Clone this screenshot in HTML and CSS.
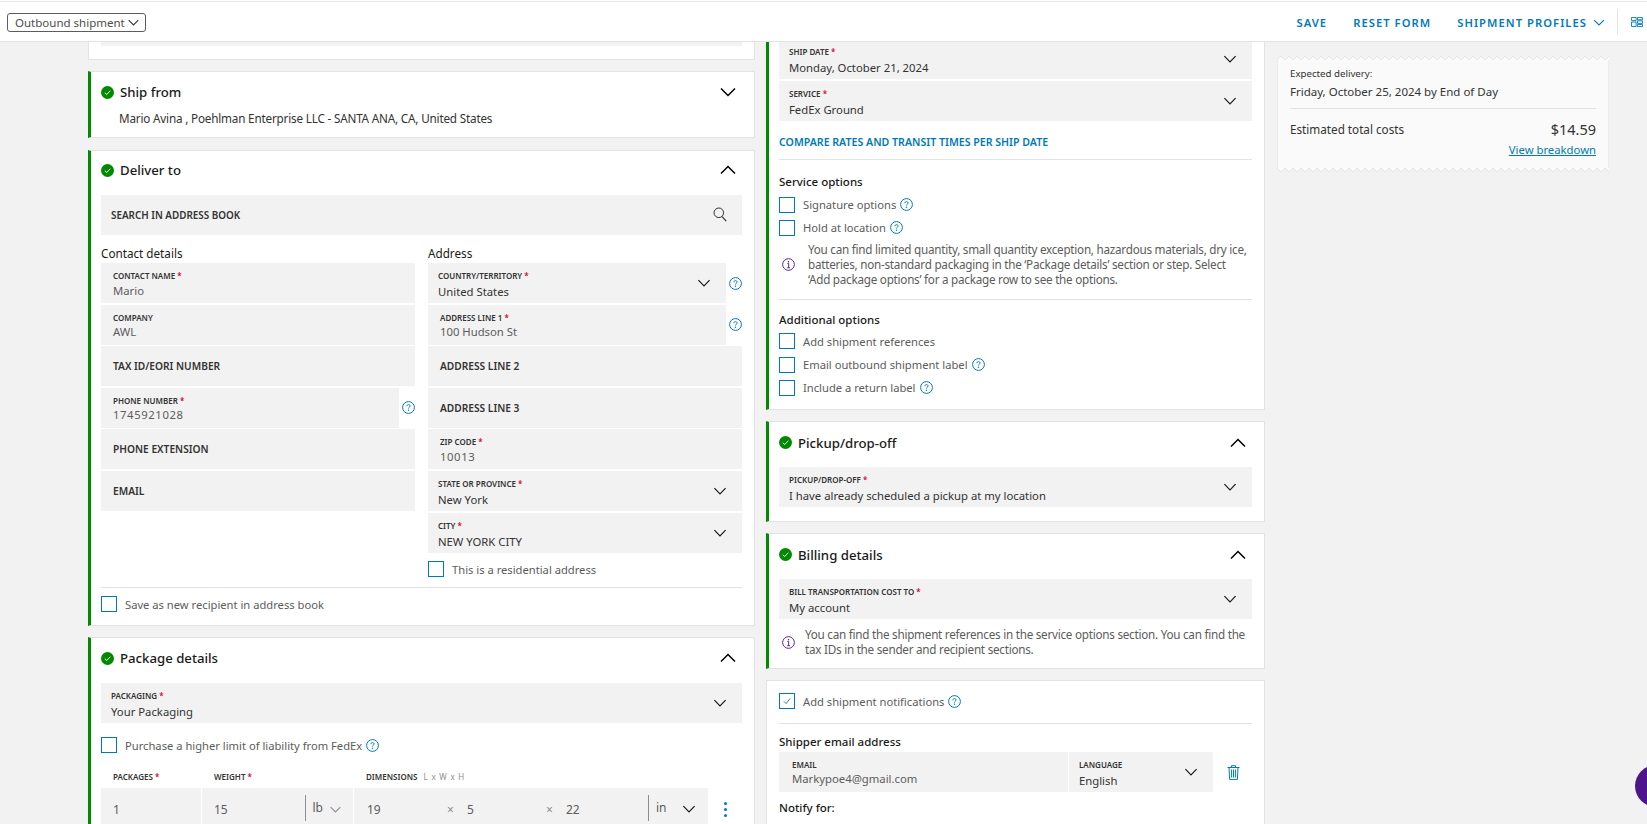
FILE: index.html
```html
<!DOCTYPE html>
<html lang="en">
<head>
<meta charset="utf-8">
<title>Outbound shipment</title>
<link rel="stylesheet" href="styles.css">
</head>
<body>
<svg class="sprite" aria-hidden="true">
  <symbol id="chev" viewBox="0 0 16 10"><path d="M1 1.5 8 8.5 15 1.5" fill="none" stroke="currentColor" stroke-width="1.5"/></symbol>
  <symbol id="chev-up" viewBox="0 0 16 10"><path d="M1 8.5 8 1.5 15 8.5" fill="none" stroke="currentColor" stroke-width="1.5"/></symbol>
  <symbol id="ok" viewBox="0 0 13 13"><circle cx="6.5" cy="6.5" r="6.5" fill="#008a00"/><path d="M3.8 6.7 5.7 8.5 9.3 4.7" fill="none" stroke="#fff" stroke-width="1"/></symbol>
  <symbol id="help" viewBox="0 0 13 13"><circle cx="6.5" cy="6.5" r="5.9" fill="none" stroke="#007ab7" stroke-width="1"/><path d="M4.9 5.2C4.9 4.2 5.6 3.6 6.5 3.6 7.4 3.6 8.1 4.2 8.1 5 8.1 6.1 6.5 6.2 6.5 7.5" fill="none" stroke="#007ab7" stroke-width="1"/><circle cx="6.5" cy="9.3" r=".7" fill="#007ab7"/></symbol>
  <symbol id="info" viewBox="0 0 14 14"><circle cx="7" cy="7" r="6.3" fill="none" stroke="#4d148c" stroke-width="1"/><circle cx="7" cy="4" r=".8" fill="#4d148c"/><path d="M5.8 6H7.2V10.5M5.6 10.5H8.6" fill="none" stroke="#4d148c" stroke-width="1"/></symbol>
  <symbol id="search" viewBox="0 0 14 15"><circle cx="5.8" cy="5.8" r="4.8" fill="none" stroke="#333" stroke-width="1"/><path d="M9.2 9.6 13.2 14.2" stroke="#333" stroke-width="1.2"/></symbol>
  <symbol id="trash" viewBox="0 0 13 15"><path d="M.5 2.5H12.5M4.5 2.5V.7H8.5V2.5M2 2.5 2.6 14.4H10.4L11 2.5M4.6 4.5V12.5M6.5 4.5V12.5M8.4 4.5V12.5" fill="none" stroke="#007ab7" stroke-width="1"/></symbol>
  <symbol id="layout" viewBox="0 0 13 11"><path d="M.5 .5H5.5V4H.5ZM.5 5.5H5.5V10.5H.5ZM7 .5H12.5V3H7ZM7 4.2H12.5V7H7ZM7 8.2H12.5V10.5H7Z" fill="none" stroke="#007ab7" stroke-width="1"/></symbol>
</svg>

<header class="topbar">
  <button class="view-select">Outbound shipment <svg class="i-sel"><use href="#chev"/></svg></button>
  <nav class="actions">
    <a class="act">SAVE</a>
    <a class="act">RESET FORM</a>
    <a class="act act-drop">SHIPMENT PROFILES <svg class="i-act"><use href="#chev"/></svg></a>
    <span class="vr"></span>
    <svg class="i-layout"><use href="#layout"/></svg>
  </nav>
</header>

<main class="page">
  <section class="col col-left">
    <div class="card card-stub"><div class="stub-field"></div></div>

    <div class="card done ship">
      <div class="card-head"><svg class="i-ok"><use href="#ok"/></svg><h2>Ship from</h2><svg class="i-head"><use href="#chev"/></svg></div>
      <p class="summary">Mario Avina , Poehlman Enterprise LLC - SANTA ANA, CA, United States</p>
    </div>

    <div class="card done deliver">
      <div class="card-head"><svg class="i-ok"><use href="#ok"/></svg><h2>Deliver to</h2><svg class="i-head"><use href="#chev-up"/></svg></div>
      <div class="field ph search"><span>SEARCH IN ADDRESS BOOK</span><svg class="i-search"><use href="#search"/></svg></div>
      <div class="two">
        <div class="stack">
          <h3 class="col-title">Contact details</h3>
          <div class="field"><label>CONTACT NAME <b>*</b></label><span class="val">Mario</span></div>
          <div class="field"><label>COMPANY</label><span class="val">AWL</span></div>
          <div class="field ph"><span>TAX ID/EORI NUMBER</span></div>
          <div class="with-help"><div class="field"><label>PHONE NUMBER <b>*</b></label><span class="val digits">1745921028</span></div><svg class="i-help"><use href="#help"/></svg></div>
          <div class="field ph"><span>PHONE EXTENSION</span></div>
          <div class="field ph"><span>EMAIL</span></div>
        </div>
        <div class="stack">
          <h3 class="col-title">Address</h3>
          <div class="with-help"><div class="field sel"><label>COUNTRY/TERRITORY <b>*</b></label><span class="val">United States</span><svg class="i-chev"><use href="#chev"/></svg></div><svg class="i-help"><use href="#help"/></svg></div>
          <div class="with-help"><div class="field"><label>ADDRESS LINE 1 <b>*</b></label><span class="val">100 Hudson St</span></div><svg class="i-help"><use href="#help"/></svg></div>
          <div class="field ph"><span>ADDRESS LINE 2</span></div>
          <div class="field ph"><span>ADDRESS LINE 3</span></div>
          <div class="field"><label>ZIP CODE <b>*</b></label><span class="val digits">10013</span></div>
          <div class="field sel"><label>STATE OR PROVINCE <b>*</b></label><span class="val">New York</span><svg class="i-chev"><use href="#chev"/></svg></div>
          <div class="field sel"><label>CITY <b>*</b></label><span class="val">NEW YORK CITY</span><svg class="i-chev"><use href="#chev"/></svg></div>
          <div class="check resi"><span class="box"></span><span>This is a residential address</span></div>
        </div>
      </div>
      <hr class="sep sep-save">
      <div class="check"><span class="box"></span><span>Save as new recipient in address book</span></div>
    </div>

    <div class="card done package">
      <div class="card-head"><svg class="i-ok"><use href="#ok"/></svg><h2>Package details</h2><svg class="i-head"><use href="#chev-up"/></svg></div>
      <div class="field sel"><label>PACKAGING <b>*</b></label><span class="val">Your Packaging</span><svg class="i-chev"><use href="#chev"/></svg></div>
      <div class="check liability"><span class="box"></span><span>Purchase a higher limit of liability from FedEx</span><svg class="i-help-in"><use href="#help"/></svg></div>
      <div class="pkg-labels">
        <label>PACKAGES <b>*</b></label>
        <label>WEIGHT <b>*</b></label>
        <label>DIMENSIONS <em>L x W x H</em></label>
      </div>
      <div class="pkg-row">
        <div class="pkg-cell">1</div>
        <div class="pkg-cell pkg-weight"><span class="grow">15</span><span class="unit">lb</span><svg class="i-unit"><use href="#chev"/></svg></div>
        <div class="pkg-cell pkg-dims">
          <span class="dim">19</span><span class="x">×</span>
          <span class="dim">5</span><span class="x">×</span>
          <span class="dim">22</span>
          <span class="unit">in</span><svg class="i-chev-in"><use href="#chev"/></svg>
        </div>
        <div class="kebab"><i></i><i></i><i></i></div>
      </div>
    </div>
  </section>

  <section class="col col-right">
    <div class="card done service">
      <div class="field sel first"><label>SHIP DATE <b>*</b></label><span class="val">Monday, October 21, 2024</span><svg class="i-chev"><use href="#chev"/></svg></div>
      <div class="field sel"><label>SERVICE <b>*</b></label><span class="val">FedEx Ground</span><svg class="i-chev"><use href="#chev"/></svg></div>
      <a class="compare">COMPARE RATES AND TRANSIT TIMES PER SHIP DATE</a>
      <hr class="sep sep-compare">
      <h3 class="opt-title">Service options</h3>
      <div class="check opt"><span class="box"></span><span>Signature options</span><svg class="i-help-in"><use href="#help"/></svg></div>
      <div class="check opt"><span class="box"></span><span>Hold at location</span><svg class="i-help-in"><use href="#help"/></svg></div>
      <div class="note note-wide"><svg class="i-info"><use href="#info"/></svg><p>You can find limited quantity, small quantity exception, hazardous materials, dry ice, batteries, non-standard packaging in the ‘Package details’ section or step. Select ‘Add package options’ for a package row to see the options.</p></div>
      <hr class="sep sep-note">
      <h3 class="opt-title">Additional options</h3>
      <div class="check opt"><span class="box"></span><span>Add shipment references</span></div>
      <div class="check opt"><span class="box"></span><span>Email outbound shipment label</span><svg class="i-help-in"><use href="#help"/></svg></div>
      <div class="check opt"><span class="box"></span><span>Include a return label</span><svg class="i-help-in"><use href="#help"/></svg></div>
    </div>

    <div class="card done pickup">
      <div class="card-head"><svg class="i-ok"><use href="#ok"/></svg><h2>Pickup/drop-off</h2><svg class="i-head"><use href="#chev-up"/></svg></div>
      <div class="field sel"><label>PICKUP/DROP-OFF <b>*</b></label><span class="val">I have already scheduled a pickup at my location</span><svg class="i-chev"><use href="#chev"/></svg></div>
    </div>

    <div class="card done billing">
      <div class="card-head"><svg class="i-ok"><use href="#ok"/></svg><h2>Billing details</h2><svg class="i-head"><use href="#chev-up"/></svg></div>
      <div class="field sel"><label>BILL TRANSPORTATION COST TO <b>*</b></label><span class="val">My account</span><svg class="i-chev"><use href="#chev"/></svg></div>
      <div class="note"><svg class="i-info"><use href="#info"/></svg><p>You can find the shipment references in the service options section. You can find the tax IDs in the sender and recipient sections.</p></div>
    </div>

    <div class="card notify">
      <div class="check opt"><span class="box on"><svg viewBox="0 0 16 16"><path d="M4.5 8.5 7 11 11.5 5" fill="none" stroke="#007ab7" stroke-width="1"/></svg></span><span>Add shipment notifications</span><svg class="i-help-in"><use href="#help"/></svg></div>
      <hr class="sep sep-notify">
      <h3 class="opt-title">Shipper email address</h3>
      <div class="mail-row">
        <div class="field mail"><label>EMAIL</label><span class="val">Markypoe4@gmail.com</span></div>
        <div class="field sel lang"><label>LANGUAGE</label><span class="val">English</span><svg class="i-chev"><use href="#chev"/></svg></div>
        <svg class="i-trash"><use href="#trash"/></svg>
      </div>
      <h3 class="opt-title notify-for">Notify for:</h3>
    </div>
  </section>

  <aside class="col">
    <div class="receipt">
      <svg class="zig" preserveAspectRatio="none"><defs><pattern id="zt" width="8" height="5" patternUnits="userSpaceOnUse"><path d="M0 5 4 1 8 5" fill="#fafafa" stroke="#e6e6e6"/></pattern></defs><rect width="100%" height="5" fill="url(#zt)"/></svg>
      <div class="receipt-body">
        <div class="r-small">Expected delivery:</div>
        <div class="r-date">Friday, October 25, 2024 by End of Day</div>
        <hr class="sep r-sep">
        <div class="r-total"><span>Estimated total costs</span><strong>$14.59</strong></div>
        <a class="r-link">View breakdown</a>
      </div>
      <svg class="zig" preserveAspectRatio="none"><defs><pattern id="zb" width="8" height="5" patternUnits="userSpaceOnUse"><path d="M0 0 4 4 8 0" fill="#fafafa" stroke="#e6e6e6"/></pattern></defs><rect width="100%" height="5" fill="url(#zb)"/></svg>
    </div>
  </aside>
</main>

<div class="chat-fab"></div>
</body>
</html>
```

FILE: styles.css
```css
* { box-sizing: border-box; }
html, body { margin: 0; height: 100%; overflow: hidden; }
body {
  background: #f2f2f2;
  color: #333;
  font-family: "Noto Sans", "Liberation Sans", sans-serif;
  font-size: 12px;
}
h2, h3, p { margin: 0; font-weight: 400; }
.sprite { display: none; }

/* top bar */
.topbar {
  height: 42px;
  background: #fff;
  border-top: 1px solid #fff;
  border-bottom: 1px solid #e3e3e3;
  box-shadow: inset 0 1px 0 #e6e6e6;
  display: flex;
  align-items: center;
  justify-content: space-between;
  padding: 2px 4px 0 7px;
}
.view-select {
  width: 139px;
  height: 19px;
  padding: 0 0 0 7px;
  display: flex;
  align-items: center;
  justify-content: space-between;
  background: #fff;
  border: 1px solid #5c5c5c;
  border-radius: 3px;
  color: #4d4d4d;
  font: 11.5px "Noto Sans", sans-serif;
}
.i-sel { width: 11px; height: 7px; margin-right: 6px; color: #333; }
.actions { display: flex; align-items: center; }
.act {
  color: #007ab7;
  font-size: 11.2px;
  font-weight: 600;
  letter-spacing: 1.05px;
  margin-right: 26px;
  display: flex;
  align-items: center;
}
.act-drop { margin-right: 0; }
.i-act { width: 12px; height: 7px; margin-left: 6px; color: #007ab7; }
.vr { width: 1px; height: 26px; background: #e3e3e3; margin: 0 13px 0 12px; }
.i-layout { width: 12px; height: 10px; }

/* columns */
.page {
  height: 782px;
  overflow: hidden;
  padding-left: 88px;
  display: grid;
  grid-template-columns: 667px 499px 332px;
  column-gap: 11px;
  align-items: start;
}
.page > aside { margin-left: 1px; }
.col { display: flex; flex-direction: column; }
.col-left { gap: 11.5px; }
.col-right { gap: 11px; }

/* cards */
.card {
  background: #fff;
  border: 1px solid #e3e3e3;
  padding: 0 12px;
}
.card.done { border-left: 3px solid #008a00; padding-left: 10px; }
.card-stub { height: 17.5px; border-top: 0; }
.stub-field { height: 4px; background: #f2f2f2; }
.card-head { height: 44px; padding-bottom: 5px; display: flex; align-items: center; }
.card-head h2 { font-size: 13.2px; font-weight: 500; color: #1a1a1a; flex: 1; margin-left: 6px; }
.i-ok { width: 13px; height: 13px; flex: none; }
.i-head { width: 16px; height: 10px; margin-right: 6px; color: #000; flex: none; }
.ship .card-head { height: 38px; padding: 2px 0 0; }
.summary { font-size: 11.7px; letter-spacing: -.18px; line-height: 16px; padding: 0 0 11px 18px; color: #333; }
.deliver { height: 476px; }
.package { height: 300px; }
.package .card-head { height: 45px; padding-bottom: 5px; }
.service { height: 368px; border-top: 0; }
.pickup { height: 101px; }
.billing { height: 136px; }
.notify { height: 200px; }

/* fields */
.field {
  position: relative;
  height: 40px;
  flex: none;
  background: #f2f2f2;
  padding: 7px 12px 0;
}
.with-help .field { flex: 1; }
.field label, .pkg-labels label {
  display: block;
  font-size: 8px;
  line-height: 12px;
  font-weight: 600;
  color: #333;
}
.field label b, .pkg-labels b { color: #de002e; font-weight: 600; }
.val { display: block; font-size: 11.3px; line-height: 16px; margin-top: .5px; color: #5c5c5c; white-space: nowrap; }
.digits { letter-spacing: .6px; }
.sel { padding-left: 10px; }
.sel .val { color: #333; margin-top: 2px; }
.i-chev { position: absolute; right: 15px; top: 16px; width: 14px; height: 8px; color: #1a1a1a; }
.ph { display: flex; align-items: center; font-size: 10.2px; font-weight: 600; padding-top: 0; color: #333; }
.search { justify-content: space-between; padding: 0 15px 0 10px; font-size: 9.9px; }
.i-search { width: 14px; height: 15px; }
.first { height: 37px; padding-top: 4px; margin-bottom: 2px; }
.first .i-chev { top: 13px; }

.two { display: grid; grid-template-columns: 314px 314px; column-gap: 13px; }
.stack { display: flex; flex-direction: column; gap: 1.6px; }
.col-title { font-size: 11.7px; line-height: 16px; height: 27px; padding-top: 10px; color: #1a1a1a; }
.with-help { display: flex; align-items: center; height: 40px; flex: none; }
.i-help { width: 13px; height: 13px; margin-left: 3px; flex: none; }
.i-help-in { width: 13px; height: 13px; margin-left: 4px; flex: none; }

/* checks */
.check { display: flex; align-items: center; height: 16px; flex: none; font-size: 11.2px; color: #5c5c5c; }
.box { width: 16px; height: 16px; border: 1px solid #007ab7; margin-right: 8px; flex: none; background: #fff; }
.box svg { display: block; width: 14px; height: 14px; }
.resi { margin-top: 6.8px; }
.sep { border: 0; border-top: 1px solid #e3e3e3; margin: 0; }
.sep-save { margin: 10px 0 8px; }
.liability { margin-top: 14px; }
.pkg-labels {
  display: grid;
  grid-template-columns: 101px 152px 1fr;
  margin-top: 18px;
  padding-left: 12px;
}
.pkg-labels em { font-style: normal; font-weight: 400; color: #8e8e8e; letter-spacing: .8px; margin-left: 4px; }
.pkg-row {
  display: grid;
  grid-template-columns: 100px 151px 354px 1fr;
  column-gap: 1px;
  margin-top: 5px;
  height: 40px;
}
.pkg-cell { background: #f2f2f2; display: flex; align-items: center; padding: 2px 0 0 12px; font-size: 12px; color: #5c5c5c; height: 40px; }
.grow { flex: 1; }
.unit { border-left: 1px solid #8e8e8e; height: 26px; line-height: 26px; padding-left: 7px; margin-bottom: 2px; }
.i-unit { width: 11px; height: 7px; margin: 0 12px 0 7px; color: #8e8e8e; flex: none; }
.pkg-dims { padding-left: 13px; }
.dim { width: 80px; flex: none; }
.x { width: 20px; color: #8e8e8e; flex: none; }
.pkg-dims .dim:nth-of-type(3) { width: 79px; }
.pkg-dims .dim:nth-of-type(5) { width: 82px; }
.i-chev-in { width: 14px; height: 8px; margin: 0 12px 0 2px; color: #1a1a1a; flex: none; }
.pkg-dims .unit { width: 32px; flex: none; }
.kebab { display: flex; flex-direction: column; align-items: center; gap: 3px; padding-top: 14px; }
.kebab i { width: 3px; height: 3px; border-radius: 50%; background: #007ab7; }

/* right column */
.compare { display: block; margin-top: 12.5px; font-size: 10.6px; line-height: 16px; font-weight: 600; color: #007ab7; }
.sep-compare { margin-top: 9.5px; }
.opt-title { font-size: 11.5px; line-height: 16px; color: #1a1a1a; font-weight: 500; }
.sep-compare + .opt-title { margin-top: 14px; }
.opt + .opt { margin-top: 7.3px; }
.opt-title + .opt { margin-top: 5px; }
.sep-compare + .opt-title + .opt { margin-top: 6.5px; }
.note { display: flex; align-items: center; }
.note p { font-size: 11.7px; letter-spacing: -.25px; line-height: 15px; color: #5c5c5c; }
.i-info { width: 13px; height: 13px; flex: none; margin: 0 10px 0 3px; }
.note-wide { margin-top: 6.5px; padding-right: 4px; }
.note-wide .i-info { margin-right: 13px; }
.sep-note { margin: 12px 0 12px; }
.pickup .card-head, .billing .card-head { height: 45px; padding-bottom: 4px; }
.billing .note { margin-top: 8px; }
.notify .check { margin-top: 12px; }
.sep-notify { margin: 14px 0 10px; }
.mail-row { display: flex; gap: 1px; margin-top: 2px; align-items: center; }
.mail { width: 289px; padding-left: 13px; }
.lang { width: 144px; }
.mail .val { margin-top: 0; }
.i-trash { width: 13px; height: 15px; margin-left: 13px; }
.notify-for { margin-top: 8px; }

/* receipt */
.receipt { margin-top: 13px; width: 332px; }
.zig { display: block; width: 100%; height: 5px; }
.receipt-body { background: #fafafa; height: 108px; padding: 7px 13px 0; box-shadow: inset 1px 0 #ececec, inset -1px 0 #ececec; }
.r-small { font-size: 9.7px; line-height: 14px; color: #333; }
.r-date { font-size: 11.5px; line-height: 16px; margin-top: 3px; color: #333; }
.r-sep { margin-top: 8px; }
.r-total { display: flex; justify-content: space-between; align-items: center; margin-top: 10px; font-size: 11.7px; }
.r-total strong { font-size: 14.5px; font-weight: 400; }
.r-link { display: block; text-align: right; margin-top: 3px; font-size: 11.3px; color: #007ab7; text-decoration: underline; }

.chat-fab {
  position: fixed;
  left: 1635px;
  top: 765px;
  width: 42px;
  height: 42px;
  border-radius: 50%;
  background: #4d148c;
}
```
